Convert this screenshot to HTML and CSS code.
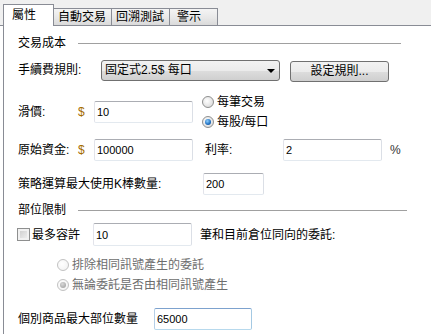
FILE: index.html
```html
<!DOCTYPE html>
<html lang="zh-Hant">
  <head>
    <meta charset="UTF-8" />
    <title>屬性</title>
    <link rel="stylesheet" href="styles.css">
  </head>
  <body>
    <div class="tabs">
      <div class="tab active">屬性</div>
      <div class="tab t-auto">自動交易</div>
      <div class="tab t-back">回溯測試</div>
      <div class="tab t-warn">警示</div>
    </div>
    <div class="panel">
      <div class="group-title"><span>交易成本</span><i class="rule"></i></div>

      <div class="row r-fee">
        <span class="lbl w-fee">手續費規則:</span>
        <div class="combo">固定式2.5$ 每口<span class="arrow"></span></div>
        <button class="btn">設定規則...</button>
      </div>

      <div class="row r-slip">
        <span class="lbl w-short">滑價:</span>
        <span class="cur">$</span>
        <input class="txt" value="10">
        <div class="radios">
          <div class="opt"><span class="radio"></span>每筆交易</div>
          <div class="opt"><span class="radio on"></span>每股/每口</div>
        </div>
      </div>

      <div class="row r-cap">
        <span class="lbl w-short">原始資金:</span>
        <span class="cur">$</span>
        <input class="txt" value="100000">
        <span class="lbl w-rate">利率:</span>
        <input class="txt" value="2">
        <span class="pct">%</span>
      </div>

      <div class="row r-bars">
        <span class="lbl w-bars">策略運算最大使用K棒數量:</span>
        <input class="txt small" value="200">
      </div>

      <div class="group-title g2"><span>部位限制</span><i class="rule"></i></div>

      <div class="row r-max">
        <span class="chk-lbl"><span class="chk"></span>最多容許</span>
        <input class="txt tall" value="10">
        <span class="after">筆和目前倉位同向的委託:</span>
      </div>

      <div class="sub-opts">
        <div class="opt off"><span class="radio"></span>排除相同訊號產生的委託</div>
        <div class="opt off"><span class="radio on"></span>無論委託是否由相同訊號產生</div>
      </div>

      <div class="row r-pos">
        <span class="lbl w-pos">個別商品最大部位數量</span>
        <input class="txt focus" value="65000">
      </div>
    </div>
  </body>
</html>
```

FILE: styles.css
```css
* {
  box-sizing: border-box;
}

body {
  margin: 0;
  background: #fff;
  color: #000;
  font-family: "Liberation Sans", "Noto Sans CJK TC", sans-serif;
  font-size: 12px;
  line-height: 16px;
}

/* tab strip */
.tabs {
  display: flex;
  align-items: flex-end;
  height: 26px;
  padding-left: 3px;
  background: #f0f0f0;
  border-bottom: 1px solid #898c95;
}

.tab {
  height: 17px;
  padding-left: 4px;
  border: 1px solid #898c95;
  border-bottom: 0;
  margin-left: -1px;
  background: linear-gradient(#f4f4f4, #e9e9e9 50%, #dadada);
  line-height: 16px;
  white-space: nowrap;
}
.tab.active {
  width: 51px;
  height: 22px;
  margin: 0 0 -1px 0;
  padding-left: 8px;
  background: #fff;
  line-height: 21px;
  position: relative;
}
.t-auto { width: 59px; }
.t-back { width: 59px; }
.t-warn { width: 49px; padding-left: 7px; }

/* panel */
.panel {
  margin-left: 3px;
  min-height: 308px;
  border-left: 1px solid #898c95;
  padding: 9px 0 0 14px;
}

.group-title {
  display: flex;
  align-items: center;
  width: 383px;
  height: 16px;
}
.group-title .rule {
  flex: 1;
  height: 1px;
  margin-left: 12px;
  background: #a0a0a0;
}
.group-title.g2 {
  margin-top: 7px;
  width: 389px;
}

.row {
  display: flex;
  align-items: center;
  height: 22px;
}
.lbl {
  flex: none;
  white-space: nowrap;
}
.w-fee { width: 83px; }
.w-short { width: 60px; }
.w-rate { width: 78px; margin-left: 12px; }
.w-bars { width: 185px; }
.w-pos { width: 136px; }

.cur {
  width: 16px;
  color: #a56c00;
}
.pct {
  margin-left: 8px;
  color: #333;
}

.r-fee { margin-top: 8px; }
.r-slip { margin-top: 20px; }
.r-cap { margin-top: 16px; }
.r-bars { margin-top: 12px; }
.r-max { margin-top: 5px; height: 23px; }
.r-pos { margin-top: 13px; }

/* controls */
.combo {
  position: relative;
  width: 179px;
  height: 21px;
  padding-left: 3px;
  border: 1px solid #707070;
  border-radius: 3px;
  background: linear-gradient(#f2f2f2, #ebebeb 50%, #dddddd 51%, #cfcfcf);
  line-height: 19px;
}
.arrow {
  position: absolute;
  right: 4px;
  top: 8px;
  border-left: 4px solid transparent;
  border-right: 4px solid transparent;
  border-top: 4px solid #000;
}

.btn {
  width: 99px;
  height: 21px;
  margin: 2px 0 0 10px;
  padding: 0;
  border: 1px solid #707070;
  border-radius: 3px;
  background: linear-gradient(#f2f2f2, #ebebeb 50%, #dddddd 51%, #cfcfcf);
  font: inherit;
  color: #000;
}

.txt {
  width: 99px;
  height: 22px;
  padding: 0 2px;
  border: 1px solid;
  border-color: #abadb3 #dbdfe6 #e3e9ef #e2e3ea;
  border-radius: 2px;
  font-family: "Liberation Sans", sans-serif;
  font-size: 11px;
  color: #000;
  outline: none;
}
.txt.small { width: 61px; }
.txt.tall { height: 23px; }
.txt.focus {
  width: 98px;
  border-color: #7da2ce #a4c9e3 #b7d9ed #b5cfe7;
}

.radios {
  margin-left: 9px;
}
.opt {
  display: flex;
  align-items: center;
  height: 20px;
  white-space: nowrap;
}
.radio {
  display: flex;
  align-items: center;
  justify-content: center;
  width: 12px;
  height: 12px;
  margin-right: 3px;
  border: 1px solid #8e8f8f;
  border-radius: 50%;
  background: radial-gradient(circle at 40% 40%, #fff, #e4e4e4 60%, #cfcfcf);
}
.radio.on::after {
  content: "";
  width: 6px;
  height: 6px;
  border-radius: 50%;
  background: radial-gradient(circle at 40% 35%, #8fd0ff, #1f6fc0 60%, #0b3c78);
}

.opt.off {
  color: #6d6d6d;
}
.opt.off .radio {
  border-color: #c2c2c2;
  background: radial-gradient(circle at 40% 40%, #fff, #f0f0f0);
}
.opt.off .radio.on::after {
  background: radial-gradient(circle at 40% 35%, #d8d8d8, #9a9a9a);
}

.sub-opts {
  margin: 9px 0 0 39px;
}

.chk-lbl {
  display: flex;
  align-items: center;
  width: 76px;
  margin-left: -1px;
  padding-right: 1px;
}
.chk {
  width: 13px;
  height: 13px;
  margin-right: 2px;
  border: 1px solid #8e8f8f;
  background: linear-gradient(135deg, #c9c9c9, #f4f4f4);
  box-shadow: inset 0 0 0 2px #f1f1f1;
}
.after {
  margin-left: 8px;
  white-space: nowrap;
}
```
